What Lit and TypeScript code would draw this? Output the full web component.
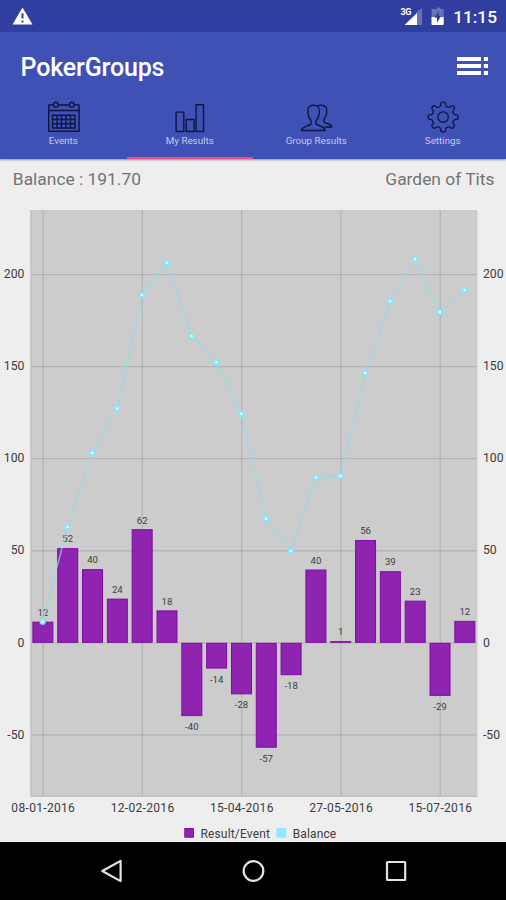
import { LitElement, html, css, svg } from "lit";
import { customElement } from "lit/decorators.js";
import { classMap } from "lit/directives/class-map.js";

interface Entry { result: number; balance: number; label: string; date?: string }

const entries: Entry[] = [
  { result: 11.5, balance: 11.5, label: "12", date: "08-01-2016" },
  { result: 51.4, balance: 62.9, label: "52" },
  { result: 40, balance: 103.1, label: "40" },
  { result: 24, balance: 127.2, label: "24" },
  { result: 61.7, balance: 188.9, label: "62", date: "12-02-2016" },
  { result: 17.6, balance: 206.4, label: "18" },
  { result: -39.8, balance: 166.6, label: "-40" },
  { result: -14, balance: 152.4, label: "-14" },
  { result: -28, balance: 124.4, label: "-28", date: "15-04-2016" },
  { result: -57, balance: 67.4, label: "-57" },
  { result: -17.6, balance: 49.9, label: "-18" },
  { result: 39.8, balance: 89.8, label: "40" },
  { result: 0.9, balance: 90.7, label: "1", date: "27-05-2016" },
  { result: 55.8, balance: 146.5, label: "56" },
  { result: 38.9, balance: 185.5, label: "39" },
  { result: 22.9, balance: 208.4, label: "23" },
  { result: -28.8, balance: 179.6, label: "-29", date: "15-07-2016" },
  { result: 11.9, balance: 191.7, label: "12" },
];

const ticks = [200, 150, 100, 50, 0, -50];
const x = (i: number) => 42.7 + i * 24.82;
const y = (v: number) => 442.8 - v * 1.841;

const icons = {
  calendar: svg`<path d="M5.5 4H1.2V30.3H31.6V4H27.5M11 4H21.5M1.2 9.5H31.6"/><circle cx="8.3" cy="3.7" r="2.4"/><circle cx="24.3" cy="3.7" r="2.4"/><path d="M5 14.2H27.5V27H5ZM5 18.5H27.5M5 22.8H27.5M9.5 14.2V27M14 14.2V27M18.5 14.2V27M23 14.2V27"/>`,
  bars: svg`<path d="M2.6 11.1H10.3V30.5H2.6ZM12.8 18.5H20.6V30.5H12.8ZM22.6 3.7H30V30.5H22.6Z"/>`,
  people: svg`<path d="M1 29.5C1 26 6 25.5 10 23.5C11.5 22.5 10.8 20 9.6 18.2C7.3 15.5 7.6 13 7.4 10C7.2 6.3 9 4.2 13 4.2C17 4.2 19 6.3 18.8 10C18.6 13 19 15.5 16.6 18.2C15.2 20 14.8 22.5 16.2 23.5C20.5 25.5 24.6 26 24.6 29.5Z"/><path d="M17 5C18 4.3 19.5 4 21 4.2C24.7 4.2 26.4 6.5 26.2 9.8C26 12.5 26.4 14.8 24.3 17C23 18.8 22.8 20.5 24 21.5C27.5 23 31 23 31.3 26H24"/>`,
  gear: svg`<g transform="translate(1.6 .6) scale(.94)"><path d="M13.8 1.2Q16 0 18.2 1.2L19 4.8Q20.8 6.8 23 5.8L25.4 4.4Q27.6 5 28.1 7.1L26.7 9.5Q25.7 11.7 27.7 13.5L31.3 14.3Q32.4 16.5 31.3 18.7L27.7 19.5Q25.7 21.3 26.7 23.5L28.1 25.9Q27.6 28 25.4 28.6L23 27.2Q20.8 26.2 19 28.2L18.2 31.8Q16 33 13.8 31.8L13 28.2Q11.2 26.2 9 27.2L6.6 28.6Q4.4 28 3.9 25.9L5.3 23.5Q6.3 21.3 4.3 19.5L.7 18.7Q-.4 16.5 .7 14.3L4.3 13.5Q6.3 11.7 5.3 9.5L3.9 7.1Q4.4 5 6.6 4.4L9 5.8Q11.2 6.8 13 4.8Z"/><circle cx="16" cy="16.5" r="5.6"/></g>`,
};

const tabs = [
  { name: "Events", icon: icons.calendar },
  { name: "My Results", icon: icons.bars, active: true },
  { name: "Group Results", icon: icons.people },
  { name: "Settings", icon: icons.gear },
];

@customElement("result-chart")
class ResultChart extends LitElement {
  static styles = css`
    :host { display: block; height: 642px; }
    svg { display: block; }
    text { font-family: Roboto, "Liberation Sans", sans-serif; fill: #3c3c3c; }
    .plot { fill: #ccc; }
    .frame { fill: none; stroke: #b8b8b8; }
    .grid { stroke: #000; stroke-opacity: 0.11; stroke-width: 1.3; }
    .axis { font-size: 12.2px; }
    .end { text-anchor: end; }
    .mid { text-anchor: middle; }
    .date { font-size: 12px; }
    .value { font-size: 9.6px; }
    .bar { fill: #8e24b0; stroke: #8208a8; stroke-width: 1; }
    .line { fill: none; stroke: #8cdfea; stroke-opacity: 0.75; stroke-width: 1.4; }
    .dot { fill: #e8fdff; stroke: #80e8fd; stroke-width: 1.8; }
    .legend { font-size: 12px; }
    .cyan { fill: #8ce9ff; }
  `;

  render() {
    return html`<svg width="506" height="642" viewBox="0 0 506 642">
      <rect class="plot" x="30.5" y="10" width="447" height="586.5"></rect>
      ${entries.map((e, i) => e.date ? svg`<line class="grid" x1=${x(i) + 0.4} x2=${x(i) + 0.4} y1="10" y2="596"></line>` : null)}
      ${ticks.map((t) => svg`
        <line class="grid" x1="31" x2="477" y1=${y(t)} y2=${y(t)}></line>
        <text class="axis end" x="24.4" y=${y(t) + 3.7}>${t}</text>
        <text class="axis" x="483" y=${y(t) + 3.7}>${t}</text>`)}
      <path class="frame" d="M31 10V596.3H477.3"></path>
      ${entries.map((e, i) => svg`
        <rect class="bar" x=${x(i) - 9.8} width="20" y=${y(Math.max(e.result, 0)) + 0.5} height=${Math.max(Math.abs(e.result) * 1.841 - 1, 0.6)}></rect>
        <text class="value mid" x=${x(i) + 0.2} y=${e.result > 0 ? y(e.result) - 5.7 : y(e.result) + 14}>${e.label}</text>`)}
      <polyline class="line" points=${entries.map((e, i) => `${x(i)},${y(e.balance)}`).join(" ")}></polyline>
      ${entries.map((e, i) => svg`<circle class="dot" cx=${x(i)} cy=${y(e.balance)} r="2.2"></circle>`)}
      ${entries.map((e, i) => e.date ? svg`<text class="date mid" x=${x(i) + 0.4} y="612.4" textLength="63.5">${e.date}</text>` : null)}
      <rect class="bar" x="184.8" y="628.6" width="8.6" height="8.6"></rect>
      <text class="legend" x="200.4" y="638" textLength="69.5">Result/Event</text>
      <rect class="cyan" x="276.5" y="628" width="9.7" height="9.7"></rect>
      <text class="legend" x="292.7" y="638" textLength="43.5">Balance</text>
    </svg>`;
  }
}

@customElement("app-root")
class AppRoot extends LitElement {
  static styles = css`
    :host { display: flex; flex-direction: column; width: 506px; height: 900px; overflow: hidden; background: #eee; font-family: Roboto, "Liberation Sans", sans-serif; }
    * { box-sizing: border-box; }
    svg { display: block; flex: none; }
    .status { height: 32px; flex: none; background: #303f9f; display: flex; align-items: center; padding: 0 9px 0 12px; color: #fff; }
    .spacer { flex: 1; }
    .clock { font-size: 17.3px; font-weight: 500; width: 46px; text-align: right; white-space: nowrap; margin-top: 1px; }
    .net { font-size: 9px; font-weight: 700; }
    .bar { height: 67px; flex: none; background: #3f51b5; display: flex; align-items: center; justify-content: space-between; padding: 2px 18px 0 20.5px; color: #fff; }
    .title { font-size: 25px; font-weight: 500; white-space: nowrap; letter-spacing: -0.16px; margin-top: 2px; }
    .menu { margin-top: -2px; }
    .tabs { height: 60px; flex: none; background: #3f51b5; display: grid; grid-template-columns: repeat(4, 1fr); box-shadow: 0 1px 2px rgba(0,0,0,.4); }
    .tab { display: flex; flex-direction: column; align-items: center; padding-top: 2px; color: #c5cae9; font-size: 9.8px; line-height: 13px; border-bottom: 2px solid transparent; }
    .active { border-color: #f74a87; }
    .tab svg { fill: none; stroke: #0d163f; stroke-width: 1.4; stroke-linejoin: round; }
    .info { height: 41px; flex: none; display: flex; justify-content: space-between; padding: 7.5px 11.5px 0 12.8px; font-size: 17.4px; line-height: 24px; color: #737373; white-space: nowrap; }
    .nav { height: 58px; flex: none; background: #000; display: flex; justify-content: space-between; align-items: center; padding: 0 98px 0 100px; }
    .nav svg { fill: none; stroke: #e4e4e4; stroke-width: 2.2; stroke-linejoin: round; }
    result-chart { flex: none; }
  `;

  render() {
    return html`
      <div class="status">
        <svg width="21" height="18" viewBox="0 0 21 18"><path fill="#fff" d="M10.5 0.5L20.5 17.5H0.5Z"></path><path stroke="#303f9f" stroke-width="2" d="M10.5 6.3V11.6M10.5 13.4V15.4"></path></svg>
        <div class="spacer"></div>
        <svg width="26" height="20" viewBox="0 0 26 20"><text class="net" x="0.5" y="9" fill="#fff" textLength="11">3G</text><path fill="#6671b8" d="M16.5 6L22 2V19H16.5Z"></path><path fill="#fff" d="M4.5 19L17 7V19Z"></path></svg>
        <svg width="25" height="20" viewBox="0 0 25 20"><path fill="#6671b8" d="M8.5 3H11V1.5H14.3V3H17.7V11H5.5V3Z"></path><path fill="#fff" d="M5.5 11H17.7V18Q17.7 19 16.7 19H6.5Q5.5 19 5.5 18Z"></path><path fill="#303f9f" d="M12.8 5L8.5 11.7H11V17L15 10H12.8Z"></path></svg>
        <div class="clock">11:15</div>
      </div>
      <div class="bar">
        <div class="title">PokerGroups</div>
        <svg class="menu" width="31" height="20" viewBox="0 0 31 20"><path fill="#fff" d="M0 1H24V5H0ZM0 8H24V12H0ZM0 15H24V19H0ZM26.8 1H31V5H26.8ZM26.8 8H31V12H26.8ZM26.8 15H31V19H26.8Z"></path></svg>
      </div>
      <div class="tabs">
        ${tabs.map((t) => html`<div class=${classMap({ tab: true, active: !!t.active })}>
          <svg width="33" height="33" viewBox="-0.5 0 33 33">${t.icon}</svg>${t.name}
        </div>`)}
      </div>
      <div class="info"><span>Balance : 191.70</span><span>Garden of Tits</span></div>
      <result-chart></result-chart>
      <div class="nav">
        <svg width="23" height="24" viewBox="0 0 23 24"><path d="M2.3 12L20.6 1.9V22.1Z"></path></svg>
        <svg width="24" height="24" viewBox="0 0 24 24"><circle cx="11.5" cy="12" r="9.8"></circle></svg>
        <svg width="23" height="24" viewBox="0 0 23 24"><rect x="2" y="3" width="18.2" height="18" rx="0.5"></rect></svg>
      </div>`;
  }
}
